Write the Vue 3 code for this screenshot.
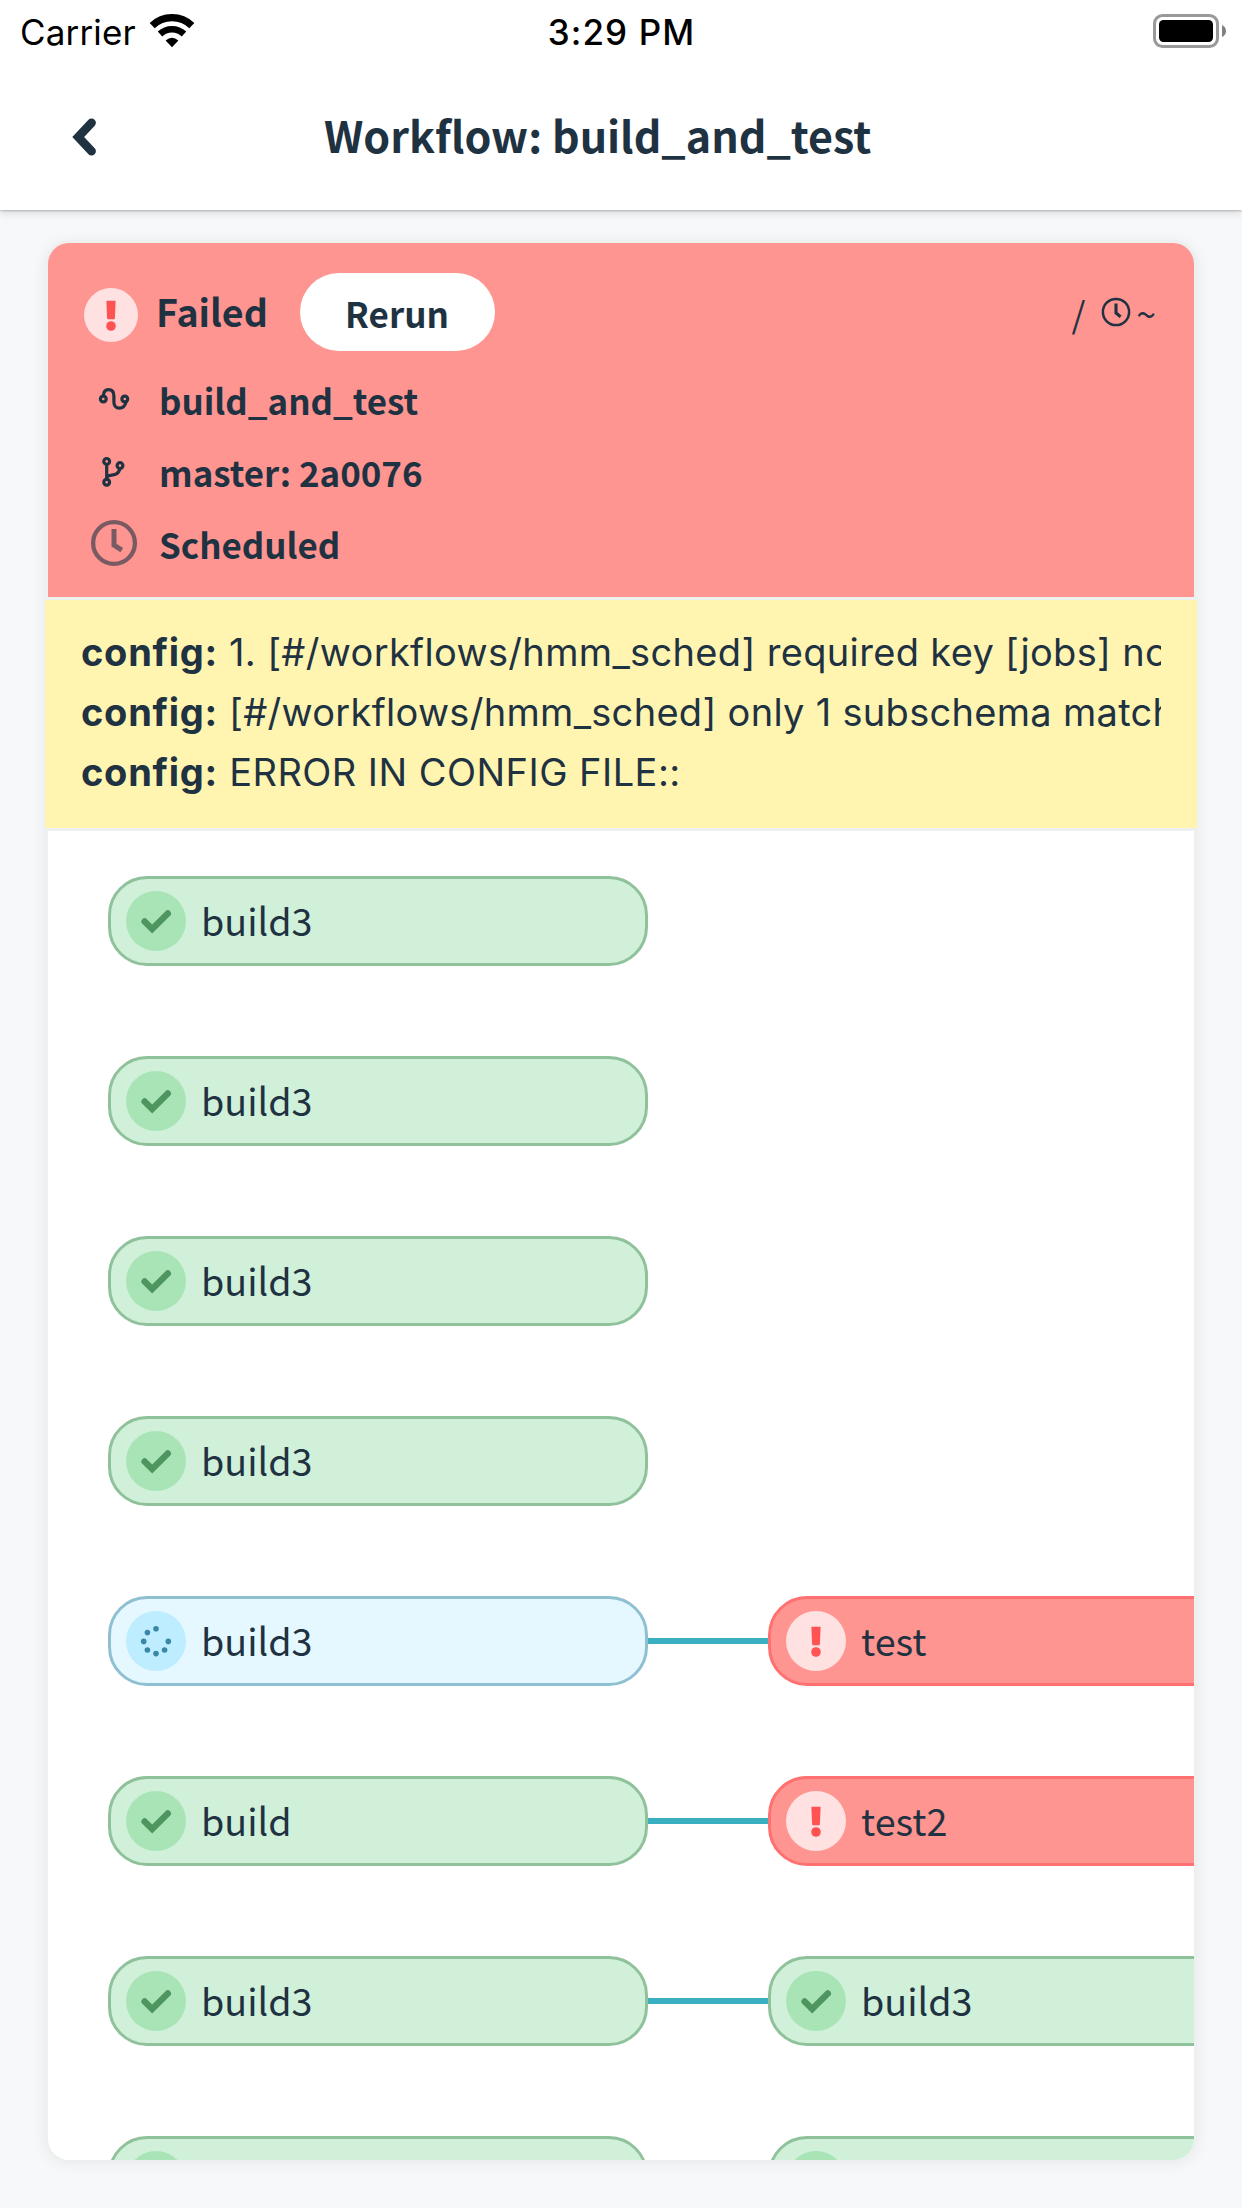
<script setup>
import { h } from 'vue'

const failures = [
  '1. [#/workflows/hmm_sched] required key [jobs] not found',
  '[#/workflows/hmm_sched] only 1 subschema matches out of 2',
  'ERROR IN CONFIG FILE::',
]

const rows = [
  [{ name: 'build3', status: 'success' }],
  [{ name: 'build3', status: 'success' }],
  [{ name: 'build3', status: 'success' }],
  [{ name: 'build3', status: 'success' }],
  [{ name: 'build3', status: 'running' }, { name: 'test', status: 'failed' }],
  [{ name: 'build', status: 'success' }, { name: 'test2', status: 'failed' }],
  [{ name: 'build3', status: 'success' }, { name: 'build3', status: 'success' }],
  [{ name: 'build3', status: 'success' }, { name: 'build3', status: 'success' }],
]

const dots = [[0, -12.2], [-8.6, -8.4], [-12.3, 0.4], [-8.6, 9], [0, 12.6], [8.6, 9], [12.3, 0.4]]

// Glyphs share a 54-unit box centred on the origin.
const StatusGlyph = ({ status }) => {
  let shapes
  if (status === 'success') {
    shapes = [h('path', { d: 'M-11.4 .4L-3.8 8L11.8 -7.6', fill: 'none', stroke: '#4f9560', 'stroke-width': 6.4, 'stroke-linecap': 'round' })]
  } else if (status === 'running') {
    shapes = dots.map(([cx, cy]) => h('circle', { cx, cy, r: 2.8, fill: '#3a87a5' }))
  } else {
    shapes = [
      h('path', { d: 'M-4 -14.3H4Q4.7 -14.3 4.6 -13.4L3.9 3.3Q3.8 4.3 2.8 4.3H-2.8Q-3.8 4.3 -3.9 3.3L-4.6 -13.4Q-4.7 -14.3 -4 -14.3Z', fill: '#ff5252' }),
      h('circle', { cx: 0, cy: 11, r: 4.8, fill: '#ff5252' }),
    ]
  }
  return h('svg', { width: 54, height: 54, viewBox: '-27 -27 54 54' }, shapes)
}
StatusGlyph.props = ['status']
</script>

<template>
  <div class="screen">
    <header class="topbar">
      <div class="statusbar">
        <div class="carrier">
          <span>Carrier</span>
          <svg width="46" height="34" viewBox="0 0 46 34">
            <path d="M3.2 11.6A28.5 28.5 0 0 1 42.8 11.6" fill="none" stroke="#000" stroke-width="7.2" />
            <path d="M11 20A17.5 17.5 0 0 1 35 20" fill="none" stroke="#000" stroke-width="6.6" />
            <path d="M16.6 26.4Q23 21.2 29.4 26.4L23 33.2Z" />
          </svg>
        </div>
        <div class="time">3:29 PM</div>
        <div class="battery">
          <svg width="74" height="34" viewBox="0 0 74 34">
            <rect x="1.5" y="1.5" width="63" height="31" rx="8" fill="none" stroke="#999" stroke-width="3" />
            <rect x="6" y="6" width="54" height="22" rx="4.5" />
            <path d="M69 11Q73 13 73 17T69 23Z" fill="#808080" />
          </svg>
        </div>
      </div>
      <div class="nav">
        <svg class="back" width="24" height="38" viewBox="0 0 24 38">
          <path d="M19.6 4.8L6.2 19L19.6 33.2" fill="none" stroke="#1f3241" stroke-width="8.6" stroke-linecap="round" />
        </svg>
        <h1>Workflow: build_and_test</h1>
      </div>
    </header>

    <main class="card">
      <section class="summary">
        <div class="headline">
          <span class="badge small failed"><StatusGlyph status="failed" /></span>
          <span class="state">Failed</span>
          <button class="rerun">Rerun</button>
          <div class="duration">
            <span>/</span>
            <svg width="30" height="30" viewBox="-15 -15 30 30" fill="none" stroke="#1f3241">
              <circle r="13.1" stroke-width="2.5" />
              <path d="M0 -8.5V1L4.6 4.8" stroke-width="3.1" />
            </svg>
            <span>~</span>
          </div>
        </div>
        <div class="meta">
          <svg width="48" height="48" viewBox="90 375 48 48" fill="none" stroke="#1f3241" stroke-width="3.2">
            <circle cx="103.3" cy="399" r="2.9" />
            <circle cx="124.8" cy="399" r="2.9" />
            <path d="M103.3 396C103.5 391.8 105.4 389.7 108.5 389.7C112 389.7 113.9 392.2 113.9 396V402C113.9 405.8 116 408.2 119.4 408.2C122.9 408.2 125.2 405.8 126.2 401.5" />
          </svg>
          <span>build_and_test</span>
        </div>
        <div class="meta">
          <svg width="48" height="48" viewBox="90 447 48 48" fill="none" stroke="#1f3241" stroke-width="3.2">
            <circle cx="106.7" cy="461.4" r="2.9" />
            <circle cx="106.7" cy="482.3" r="2.9" />
            <circle cx="120" cy="465.6" r="2.9" />
            <path d="M106.7 464V480M106.9 477.2C109.5 473.5 118.6 477.5 120 468" />
          </svg>
          <span>master: 2a0076</span>
        </div>
        <div class="meta">
          <svg width="48" height="48" viewBox="-24 -24 48 48" fill="none" stroke="#785a63">
            <circle r="20.9" stroke-width="4.3" />
            <path d="M0 -14V2.2L7.8 7.2" stroke-width="5" />
          </svg>
          <span>Scheduled</span>
        </div>
      </section>

      <section class="messages">
        <p v-for="text in failures" :key="text"><b>config:</b> {{ text }}</p>
      </section>

      <section class="graph">
        <div v-for="(row, r) in rows" :key="r" class="row">
          <template v-for="(job, c) in row" :key="c">
            <span v-if="c" class="link" />
            <div class="job" :class="job.status">
              <span class="badge" :class="job.status"><StatusGlyph :status="job.status" /></span>
              <span class="name">{{ job.name }}</span>
            </div>
          </template>
        </div>
      </section>
    </main>
  </div>
</template>

<style>
body {
  margin: 0;
}
</style>

<style scoped>
* {
  box-sizing: border-box;
}
.screen {
  width: 1242px;
  height: 2208px;
  overflow: hidden;
  background: #f6f8fa;
  color: #1f3241;
  font-family: "Noto Sans CJK JP", "Noto Sans CJK SC", sans-serif;
}
svg {
  display: block;
  flex: none;
}
.topbar {
  height: 210px;
  background: #fff;
  box-shadow: 0 1px 2px rgba(0, 0, 0, 0.22), 0 3px 9px rgba(0, 0, 0, 0.12);
}
.statusbar {
  display: grid;
  grid-template-columns: 1fr auto 1fr;
  align-items: center;
  height: 60px;
  padding: 0 15px 0 20px;
  color: #000;
  font: 400 35px/60px Inter, sans-serif;
}
.carrier {
  display: flex;
  align-items: center;
  gap: 13px;
}
.carrier span {
  padding-top: 2px;
  letter-spacing: 0.15px;
}
.time {
  margin-left: -4px;
  padding-top: 2px;
  font-weight: 500;
  letter-spacing: 1.1px;
}
.battery {
  display: flex;
  justify-content: flex-end;
}
.nav {
  display: flex;
  align-items: center;
  height: 150px;
  padding: 0 0 2px 72px;
}
.back {
  margin-top: 5px;
}
h1 {
  margin: 0 0 0 228px;
  font-size: 43px;
  line-height: 60px;
  font-weight: 700;
  white-space: nowrap;
}
.card {
  display: flex;
  flex-direction: column;
  width: 1152px;
  height: 1920px;
  margin: 30px 45px 0;
  padding: 3px 3px 0;
  border-radius: 24px;
  background: #eeefef;
  box-shadow: 0 3px 15px rgba(0, 0, 0, 0.07);
}
.summary {
  height: 354px;
  padding: 30px 36px 0;
  border-radius: 21px 21px 0 0;
  background: #ff9591;
}
.headline {
  display: flex;
  align-items: center;
  height: 78px;
  margin-bottom: 12px;
}
.badge {
  display: grid;
  place-items: center;
  flex: none;
  width: 60px;
  height: 60px;
  border-radius: 50%;
}
.badge.small {
  width: 54px;
  height: 54px;
  margin-top: 6px;
}
.badge.success {
  background: #a8e4b6;
}
.badge.running {
  background: #beedff;
}
.badge.failed {
  background: #ffe1e1;
}
.state {
  width: 144px;
  margin-left: 18px;
  padding-bottom: 2px;
  font-size: 37.6px;
  line-height: 60px;
  font-weight: 700;
}
.rerun {
  width: 195px;
  height: 78px;
  padding: 1px 1px 0 0;
  border: 0;
  border-radius: 39px;
  background: #fff;
  color: inherit;
  font: inherit;
  font-size: 35px;
  line-height: 77px;
  font-weight: 700;
}
.duration {
  display: flex;
  align-items: center;
  gap: 5px;
  margin-left: auto;
  padding-right: 2px;
  font-size: 35.5px;
  line-height: 60px;
}
.duration span {
  padding-top: 1px;
}
.duration span:first-child {
  margin-right: 11px;
}
.meta {
  display: flex;
  align-items: center;
  gap: 21px;
  height: 72px;
  padding-left: 6px;
  font-size: 34.9px;
  line-height: 72px;
  font-weight: 700;
}
.meta span {
  padding-top: 1px;
}
.messages {
  height: 228px;
  margin: 3px -3px;
  padding: 22px 36px 0;
  background: #fff5b1;
  font: 400 38px/60px Inter, sans-serif;
}
.messages p {
  margin: 0;
  overflow: hidden;
  white-space: nowrap;
  letter-spacing: 0.3px;
}
.messages p:first-child {
  letter-spacing: 0.34px;
}
.messages p:last-child {
  letter-spacing: 0.46px;
}
.messages b {
  letter-spacing: 0.75px;
}
.graph {
  flex: 1;
  min-height: 0;
  overflow: hidden;
  padding: 45px 0 0 60px;
  border-radius: 0 0 21px 21px;
  background: #fff;
}
.row {
  display: flex;
  align-items: center;
  height: 90px;
  margin-bottom: 90px;
}
.link {
  flex: none;
  width: 120px;
  height: 6px;
  background: #3aafc1;
}
.job {
  display: flex;
  align-items: center;
  flex: none;
  width: 540px;
  height: 90px;
  padding-left: 15px;
  border: 3px solid;
  border-radius: 39px;
}
.job.success {
  border-color: #8fc19b;
  background: #d1f0d9;
}
.job.running {
  border-color: #8fc0d1;
  background: #e5f8ff;
}
.job.failed {
  border-color: #ff7070;
  background: #ff9591;
}
.name {
  margin-left: 15px;
  padding-bottom: 2px;
  font-size: 37.7px;
  line-height: 60px;
}
</style>
